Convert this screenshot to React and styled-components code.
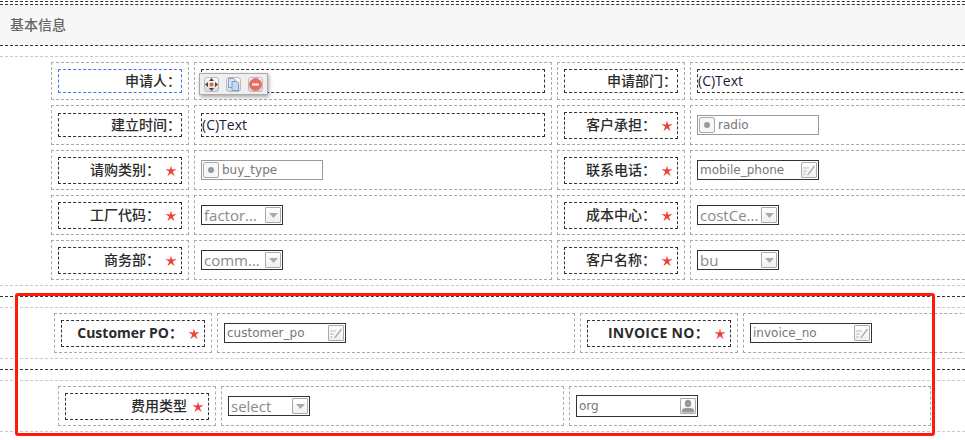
import styled, { createGlobalStyle } from "styled-components";

const Global = createGlobalStyle`
  html, body {
    margin: 0;
    padding: 0;
    background: #fff;
    overflow: hidden;
  }
`;

const Page = styled.div`
  position: relative;
  width: 965px;
  height: 440px;
  overflow: hidden;
  padding-top: 1px;
  box-sizing: border-box;
  font-family: "Noto Sans", "Noto Sans CJK SC", sans-serif;
  color: #333;
`;

const DarkRule = styled.div`
  border-top: 1px dashed #333;
  margin-top: ${(p) => p.$top ?? 10}px;
`;

const LightRule = styled.div`
  border-top: 1px dashed #c8c8c8;
  margin-top: ${(p) => p.$top ?? 10}px;
  margin-bottom: ${(p) => p.$bottom ?? 5}px;
`;

const Header = styled.div`
  height: 42px;
  margin-top: 2px;
  box-sizing: border-box;
  display: flex;
  align-items: center;
  padding: 0 0 2px 10px;
  background: #f7f7f7;
  border-top: 1px dashed #333;
  border-bottom: 1px dashed #333;
  font-family: "Noto Sans CJK SC", sans-serif;
  font-size: 14px;
  font-weight: 500;
  color: #666;
`;

const Rows = styled.div`
  display: flex;
  flex-direction: column;
  gap: 5px;
`;

const Row = styled.div`
  display: grid;
  grid-template-columns: ${(p) => p.$columns};
  column-gap: 5px;
  margin-left: ${(p) => p.$left}px;
  height: ${(p) => p.$height}px;
`;

const Cell = styled.div`
  position: relative;
  box-sizing: border-box;
  display: flex;
  align-items: center;
  padding: 0 6px;
  border: 1px dashed #aaa;
`;

const Label = styled.div`
  flex: 1;
  box-sizing: border-box;
  height: ${(p) => (p.$required ? 27 : 24)}px;
  display: flex;
  align-items: center;
  justify-content: flex-end;
  padding-bottom: 3px;
  border: 1px dashed ${(p) => (p.$active ? "#4a6cf7" : "#333")};
  font-family: ${(p) =>
    p.$latin ? '"Open Sans", "Noto Sans CJK SC", sans-serif' : '"Noto Sans CJK SC", sans-serif'};
  font-size: 14px;
  font-weight: ${(p) => (p.$latin ? 700 : 500)};
  letter-spacing: ${(p) => (p.$caps ? "0.3px" : "0")};
  color: #2b2b2b;
`;

const Star = styled.span`
  width: 21px;
  flex: none;
  display: flex;
  align-items: center;
  justify-content: center;
  margin-top: 4px;
`;

const TextBox = styled.div`
  flex: 1;
  box-sizing: border-box;
  height: 24px;
  display: flex;
  align-items: center;
  padding-bottom: 2px;
  border: 1px dashed #333;
  font-family: "Open Sans", sans-serif;
  font-size: 14px;
  color: #1c1c3a;
  white-space: nowrap;
`;

const Input = styled.div`
  box-sizing: border-box;
  width: ${(p) => p.$width ?? 122}px;
  height: ${(p) => p.$height ?? 20}px;
  display: flex;
  align-items: center;
  justify-content: space-between;
  padding: 0 1px 0 2px;
  border: 1px solid ${(p) => (p.$muted ? "#999" : "#333")};
  font-family: "DejaVu Sans", sans-serif;
  font-size: 12px;
  color: #777;
  white-space: nowrap;
  overflow: hidden;
`;

const RadioWrap = styled.div`
  display: flex;
  align-items: center;
  gap: 3px;
  margin-left: -1px;
`;

const RadioBox = styled.span`
  box-sizing: border-box;
  width: 16px;
  height: 16px;
  display: flex;
  align-items: center;
  justify-content: center;
  border: 1px solid #aaa;
  border-radius: 2px;
  background: #f7f7f7;
`;

const RadioDot = styled.span`
  width: 6px;
  height: 6px;
  border-radius: 50%;
  background: #999;
`;

const SelectText = styled.span`
  font-family: "Open Sans", sans-serif;
  font-size: 15px;
  color: #8a8a8a;
`;

const IconBox = styled.span`
  box-sizing: border-box;
  flex: none;
  width: 16px;
  height: 16px;
  display: flex;
  align-items: center;
  justify-content: center;
  border: 1px solid #aaa;
  border-radius: 1px;
  background: linear-gradient(#ffffff, #f0f0f0);
`;

const Toolbar = styled.div`
  position: absolute;
  left: 4px;
  top: 10px;
  z-index: 2;
  box-sizing: border-box;
  width: 69px;
  height: 22px;
  display: flex;
  align-items: center;
  gap: 7px;
  padding-left: 4px;
  background: #efefef;
  border: 1px solid #aaa;
  box-shadow: 1px 2px 4px rgba(0, 0, 0, 0.35);
`;

const ToolButton = styled.span`
  box-sizing: border-box;
  width: 15px;
  height: 15px;
  display: flex;
  align-items: center;
  justify-content: center;
  border: 1px solid #bbb;
  border-radius: 3px;
  background: linear-gradient(#fafafa, #d9d9d9);
`;

const Highlight = styled.div`
  position: absolute;
  left: 15px;
  top: 293px;
  width: 920px;
  height: 143px;
  box-sizing: border-box;
  border: 3px solid #ff1a0a;
  border-radius: 3px;
  pointer-events: none;
`;

const StarIcon = () => (
  <svg width="12" height="12" viewBox="0 0 11 11">
    <path
      d="M5.5 .5 L6.5 4.2 L10.6 3.7 L7.2 6.2 L8.8 10.3 L5.5 7.6 L2.2 10.3 L3.8 6.2 L.4 3.7 L4.5 4.2 Z"
      fill="#e9443a"
    />
  </svg>
);

const MoveIcon = () => (
  <svg width="13" height="13" viewBox="0 0 13 13">
    <path d="M6.5 0 L9 3 L4 3 Z M6.5 13 L9 10 L4 10 Z M0 6.5 L3 4 L3 9 Z M13 6.5 L10 4 L10 9 Z" fill="#444" />
    <circle cx="6.5" cy="6.5" r="2" fill="#f0641e" />
  </svg>
);

const CopyIcon = () => (
  <svg width="13" height="13" viewBox="0 0 13 13">
    <path d="M1.5 .5 H6.5 L8 2 V9.5 H1.5 Z" fill="#dbe6f5" stroke="#7f9cc4" />
    <path d="M5 3.5 H10 L11.5 5 V12.5 H5 Z" fill="#c6d8f0" stroke="#7f9cc4" />
  </svg>
);

const DeleteIcon = () => (
  <svg width="15" height="15" viewBox="0 0 15 15">
    <circle cx="7.5" cy="7.5" r="7" fill="#ec6a5e" stroke="#d9796f" />
    <rect x="3.5" y="6" width="8" height="3" rx="1" fill="#fbe6e3" />
  </svg>
);

const EditIcon = () => (
  <svg width="14" height="14" viewBox="0 0 14 14">
    <path d="M1 5 H7 M1 8 H5 M1 11 H3.5" stroke="#bbb" strokeWidth="1" fill="none" />
    <path d="M12 2.5 L6 10.5 L5 12.5 L7 11.5 L13 3.5 Z" fill="#aaa" />
  </svg>
);

const ArrowIcon = () => (
  <svg width="9" height="5" viewBox="0 0 9 5">
    <path d="M0 0 H9 L4.5 5 Z" fill="#aaa" />
  </svg>
);

const PersonIcon = () => (
  <svg width="14" height="14" viewBox="0 0 14 14">
    <ellipse cx="7" cy="4.5" rx="3.2" ry="3.8" fill="#999" />
    <path d="M1 13.5 V11.5 C1 9.5 4 9 7 9 C10 9 13 9.5 13 11.5 V13.5 Z" fill="#999" />
  </svg>
);

const FieldLabel = ({ text, required, active, latin, caps }) => (
  <Label $required={required} $active={active} $latin={latin} $caps={caps}>
    {text}
    {required && (
      <Star>
        <StarIcon />
      </Star>
    )}
  </Label>
);

const RadioField = ({ name }) => (
  <Input $muted>
    <RadioWrap>
      <RadioBox>
        <RadioDot />
      </RadioBox>
      {name}
    </RadioWrap>
  </Input>
);

const EditField = ({ name }) => (
  <Input>
    {name}
    <IconBox>
      <EditIcon />
    </IconBox>
  </Input>
);

const SelectField = ({ name }) => (
  <Input $width={82}>
    <SelectText>{name}</SelectText>
    <IconBox>
      <ArrowIcon />
    </IconBox>
  </Input>
);

const basicColumns = "138px 358px 128px 300px";

export default function App() {
  return (
    <Page>
      <Global />
      <DarkRule $top={0} />
      <Header>基本信息</Header>
      <LightRule />
      <Rows>
        <Row $columns={basicColumns} $left={51} $height={38}>
          <Cell>
            <FieldLabel text="申请人：" active />
          </Cell>
          <Cell>
            <TextBox />
            <Toolbar>
              <ToolButton>
                <MoveIcon />
              </ToolButton>
              <ToolButton>
                <CopyIcon />
              </ToolButton>
              <ToolButton>
                <DeleteIcon />
              </ToolButton>
            </Toolbar>
          </Cell>
          <Cell>
            <FieldLabel text="申请部门：" />
          </Cell>
          <Cell>
            <TextBox>(C)Text</TextBox>
          </Cell>
        </Row>
        <Row $columns={basicColumns} $left={51} $height={40}>
          <Cell>
            <FieldLabel text="建立时间：" />
          </Cell>
          <Cell>
            <TextBox>(C)Text</TextBox>
          </Cell>
          <Cell>
            <FieldLabel text="客户承担：" required />
          </Cell>
          <Cell>
            <RadioField name="radio" />
          </Cell>
        </Row>
        <Row $columns={basicColumns} $left={51} $height={40}>
          <Cell>
            <FieldLabel text="请购类别：" required />
          </Cell>
          <Cell>
            <RadioField name="buy_type" />
          </Cell>
          <Cell>
            <FieldLabel text="联系电话：" required />
          </Cell>
          <Cell>
            <EditField name="mobile_phone" />
          </Cell>
        </Row>
        <Row $columns={basicColumns} $left={51} $height={40}>
          <Cell>
            <FieldLabel text="工厂代码：" required />
          </Cell>
          <Cell>
            <SelectField name="factor..." />
          </Cell>
          <Cell>
            <FieldLabel text="成本中心：" required />
          </Cell>
          <Cell>
            <SelectField name="costCe..." />
          </Cell>
        </Row>
        <Row $columns={basicColumns} $left={51} $height={40}>
          <Cell>
            <FieldLabel text="商务部：" required />
          </Cell>
          <Cell>
            <SelectField name="comm..." />
          </Cell>
          <Cell>
            <FieldLabel text="客户名称：" required />
          </Cell>
          <Cell>
            <SelectField name="bu" />
          </Cell>
        </Row>
      </Rows>
      <LightRule $top={5} $bottom={0} />
      <DarkRule />
      <LightRule />
      <Row $columns="158px 358px 158px 300px" $left={54} $height={40}>
        <Cell>
          <FieldLabel text="Customer PO：" required latin />
        </Cell>
        <Cell>
          <EditField name="customer_po" />
        </Cell>
        <Cell>
          <FieldLabel text="INVOICE NO：" required latin caps />
        </Cell>
        <Cell>
          <EditField name="invoice_no" />
        </Cell>
      </Row>
      <LightRule $top={5} $bottom={0} />
      <DarkRule />
      <LightRule />
      <Row $columns="158px 343px 362px" $left={58} $height={40}>
        <Cell>
          <FieldLabel text="费用类型" required />
        </Cell>
        <Cell>
          <SelectField name="select" />
        </Cell>
        <Cell>
          <Input $height={22}>
            org
            <IconBox>
              <PersonIcon />
            </IconBox>
          </Input>
        </Cell>
      </Row>
      <LightRule $top={5} $bottom={0} />
      <Highlight />
    </Page>
  );
}
